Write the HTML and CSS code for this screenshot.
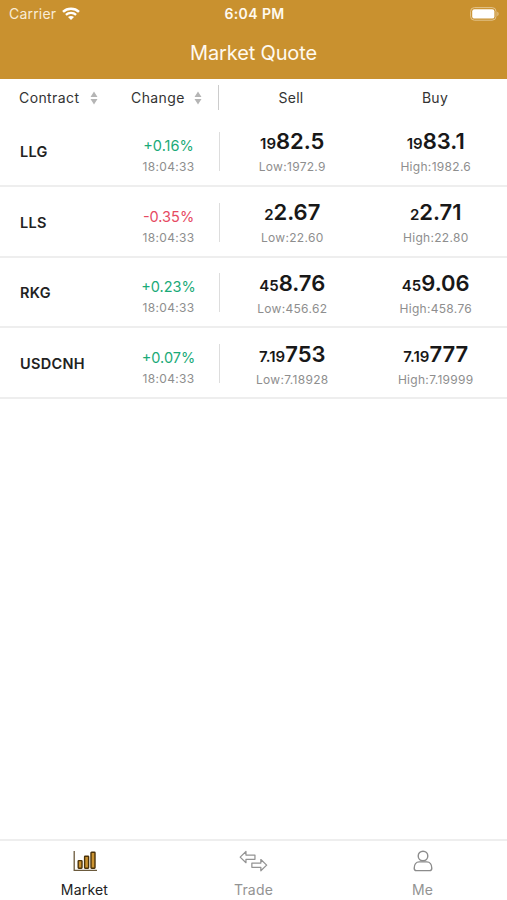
FILE: index.html
```html
<!doctype html>
<html lang="en">
<head>
    <meta charset="UTF-8">
    <meta name="viewport" content="width=device-width, initial-scale=1.0">
    <title>Market Quote</title>
    <link rel="stylesheet" href="styles.css">
</head>
<body>
<div class="app">
    <header class="top">
        <div class="status">
            <div class="carrier">
                <span>Carrier</span>
                <svg class="wifi" viewBox="0 0 18 13" width="18" height="13">
                    <path d="M1 4.9C5.4.7 12.6.7 17 4.9" fill="none" stroke="#fff" stroke-width="2.5"/>
                    <path d="M3.9 7.9c2.9-2.7 7.3-2.7 10.2 0" fill="none" stroke="#fff" stroke-width="2.3"/>
                    <path d="M9 13L6 10.1c1.7-1.5 4.3-1.5 6 0z" fill="#fff"/>
                </svg>
            </div>
            <div class="time">6:04 PM</div>
            <div class="battery">
                <svg viewBox="0 0 30 14" width="30" height="14">
                    <rect x=".6" y=".6" width="25.4" height="12.6" rx="3.8" fill="none" stroke="#e3c48d" stroke-width="1"/>
                    <rect x="2.2" y="2.2" width="22.2" height="9.4" rx="2.2" fill="#fff"/>
                    <path d="M27.3 4.7c1.7.6 1.7 3.8 0 4.4z" fill="#e3c48d"/>
                </svg>
            </div>
        </div>
        <h1 class="title">Market Quote</h1>
    </header>
    <div class="thead">
        <div class="sort name">
            <span>Contract</span>
            <svg viewBox="0 0 8 14" width="8" height="14"><path d="M4 .5L7.5 6h-7zM4 13.5L.5 8h7z" fill="#b5b5b5"/></svg>
        </div>
        <div class="sort change-head">
            <span>Change</span>
            <svg viewBox="0 0 8 14" width="8" height="14"><path d="M4 .5L7.5 6h-7zM4 13.5L.5 8h7z" fill="#b5b5b5"/></svg>
        </div>
        <div class="line"></div>
        <div class="price">Sell</div>
        <div class="price">Buy</div>
    </div>
    <div class="list">
        <div class="row">
            <div class="name">LLG</div>
            <div class="change up"><b>+0.16%</b><small>18:04:33</small></div>
            <div class="line"></div>
            <div class="price"><p><i>19</i>82.5</p><small>Low:1972.9</small></div>
            <div class="price"><p><i>19</i>83.1</p><small>High:1982.6</small></div>
        </div>
        <div class="row">
            <div class="name">LLS</div>
            <div class="change down"><b>-0.35%</b><small>18:04:33</small></div>
            <div class="line"></div>
            <div class="price"><p><i>2</i>2.67</p><small>Low:22.60</small></div>
            <div class="price"><p><i>2</i>2.71</p><small>High:22.80</small></div>
        </div>
        <div class="row">
            <div class="name">RKG</div>
            <div class="change up"><b>+0.23%</b><small>18:04:33</small></div>
            <div class="line"></div>
            <div class="price"><p><i>45</i>8.76</p><small>Low:456.62</small></div>
            <div class="price"><p><i>45</i>9.06</p><small>High:458.76</small></div>
        </div>
        <div class="row">
            <div class="name">USDCNH</div>
            <div class="change up"><b>+0.07%</b><small>18:04:33</small></div>
            <div class="line"></div>
            <div class="price"><p><i>7.19</i>753</p><small>Low:7.18928</small></div>
            <div class="price"><p><i>7.19</i>777</p><small>High:7.19999</small></div>
        </div>
    </div>
    <nav class="tabs">
        <div class="tab active">
            <svg viewBox="0 0 24 22" width="24" height="22">
                <path d="M1.2 1v19.3H24" fill="none" stroke="#6b5a3c" stroke-width="1.3"/>
                <g fill="#cb9331" stroke="#4a3209" stroke-width="1.4">
                    <rect x="5.2" y="10.6" width="3.8" height="7.6" rx=".6"/>
                    <rect x="11.6" y="6.2" width="4" height="12" rx=".6"/>
                    <rect x="18" y="2.2" width="4" height="16" rx=".6"/>
                </g>
            </svg>
            <span>Market</span>
        </div>
        <div class="tab">
            <svg viewBox="0 0 30 22" width="29" height="22">
                <g fill="none" stroke="#949494" stroke-width="1.3" stroke-linejoin="round">
                    <path d="M1.2 7L7.2 1.2V4.9H16.5V9.3H7.2V12.8z"/>
                    <path d="M28.6 15.3L22.6 9.5V13.1H13.3V17.5H22.6V21.1z"/>
                </g>
            </svg>
            <span>Trade</span>
        </div>
        <div class="tab">
            <svg viewBox="0 0 20 22" width="20" height="22">
                <g fill="none" stroke="#8c8c8c" stroke-width="1.4">
                    <circle cx="10" cy="6" r="4.8"/>
                    <path d="M6.2 11.9h7.6c3 0 5 2.6 5 6.3 0 1.6-.7 2.4-2.2 2.4H3.4c-1.5 0-2.2-.8-2.2-2.4 0-3.7 2-6.3 5-6.3z"/>
                </g>
            </svg>
            <span>Me</span>
        </div>
    </nav>
</div>
</body>
</html>
```
FILE: styles.css
```css
* {
    margin: 0;
    padding: 0;
    box-sizing: border-box;
}

body {
    background-color: #fff;
    font-family: Inter, "Liberation Sans", sans-serif;
    color: #222;
}

svg {
    display: block;
}

.app {
    height: 900px;
    display: flex;
    flex-direction: column;
}

.top {
    height: 79px;
    background-color: #c9912f;
    color: #fffaf0;
}

.status {
    height: 27px;
    padding: 0 7px 0 9px;
    display: grid;
    grid-template-columns: 1fr auto 1fr;
    align-items: center;
    font-size: 14px;
    letter-spacing: 0.2px;
}

.carrier {
    display: flex;
    align-items: center;
    gap: 6px;
    color: #f9ecd6;
}

.time {
    font-weight: 600;
    letter-spacing: 0.4px;
}

.battery {
    display: flex;
    justify-content: flex-end;
}

.title {
    font-size: 20px;
    font-weight: 400;
    line-height: 52px;
    letter-spacing: -0.15px;
    text-align: center;
}

.thead {
    height: 37px;
    display: flex;
    align-items: center;
    font-size: 14px;
    letter-spacing: 0.3px;
    color: #333;
}

.sort {
    display: flex;
    align-items: center;
    gap: 11px;
}

.sort.name {
    padding-left: 19px;
    font-weight: 400;
    font-size: 14px;
    letter-spacing: 0.4px;
    width: 131px;
}

.change-head {
    width: 87px;
    gap: 9px;
    letter-spacing: 0.4px;
}

.thead .line {
    width: 1px;
    height: 25px;
    background-color: #ccc;
}

.row {
    height: 70.8px;
    display: flex;
    align-items: center;
    border-bottom: 2px solid #eee;
}

.name {
    width: 118px;
    padding: 2px 0 0 20px;
    font-size: 14.5px;
    font-weight: 600;
    letter-spacing: 0.3px;
}

.sort.name {
    padding-top: 0;
}

.change {
    width: 101px;
    padding-top: 11px;
    text-align: center;
}

.change b {
    display: block;
    font-size: 14.5px;
    font-weight: 400;
    line-height: 22px;
}

.up b {
    color: #1aaa78;
}

.down b {
    color: #e64a62;
}

small {
    display: block;
    font-size: 12px;
    line-height: 20px;
    letter-spacing: 0.3px;
    color: #8e8e8e;
}

.row .line {
    width: 1px;
    height: 39px;
    margin-top: 2px;
    background-color: #ddd;
}

.price {
    flex: 1;
    text-align: center;
}

.row .price {
    padding: 5px 0 0 1px;
}

.price p {
    font-size: 22px;
    font-weight: 600;
    line-height: 27px;
    color: #181818;
}

.price i {
    font-size: 15px;
    font-style: normal;
}

.tabs {
    height: 61px;
    margin-top: auto;
    display: flex;
    border-top: 2px solid #eee;
}

.tab {
    flex: 1;
    padding-top: 9px;
    display: flex;
    flex-direction: column;
    align-items: center;
    gap: 9px;
    font-size: 14px;
    letter-spacing: 0.2px;
    color: #939393;
}

.active {
    color: #222;
}
```
